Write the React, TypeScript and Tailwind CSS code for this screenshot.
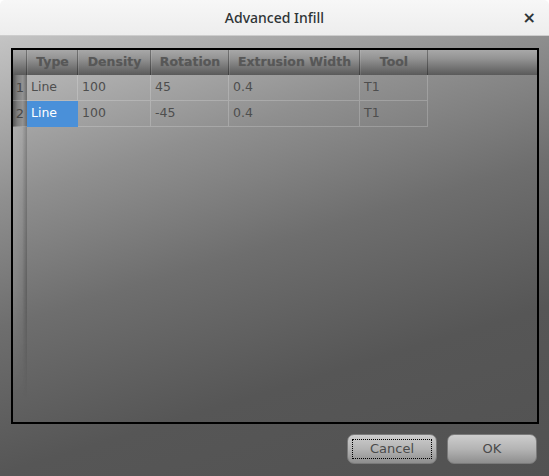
import React from 'react';

// Column widths taken from the infill table
const columns = [
  { key: 'type', label: 'Type', width: 'w-[51px]' },
  { key: 'density', label: 'Density', width: 'w-[73px]' },
  { key: 'rotation', label: 'Rotation', width: 'w-[78px]' },
  { key: 'width', label: 'Extrusion Width', width: 'w-[131px]' },
  { key: 'tool', label: 'Tool', width: 'w-[68px]' },
];

const rows = [
  { type: 'Line', density: '100', rotation: '45', width: '0.4', tool: 'T1' },
  { type: 'Line', density: '100', rotation: '-45', width: '0.4', tool: 'T1' },
];

const headerBg =
  'bg-[linear-gradient(to_bottom,#a8a8a8_0%,#939393_35%,#747474_70%,#5a5a5a_100%)]';

function HeaderCell({ label, width }: { label: string; width: string }) {
  return (
    <div
      className={`${width} h-full flex items-center justify-center ${headerBg} border-l border-white/10 border-r border-r-black/30 text-[12.5px] font-bold text-[#575757] [text-shadow:0_0_1px_rgba(0,0,0,0.15)]`}
    >
      {label}
    </div>
  );
}

function RowHeader({ n }: { n: number }) {
  return (
    <div className="w-[14px] h-full flex items-center justify-center bg-[linear-gradient(to_right,#565656_0%,#7c7c7c_30%,#939393_70%,#6c6c6c_100%)] border-b border-white/20 text-[13px] text-[#474747]">
      {n}
    </div>
  );
}

function Table() {
  return (
    <div className="flex-1 flex flex-col min-h-0">
      {/* header */}
      <div className="h-[25px] flex shrink-0">
        <div className={`w-[14px] h-full ${headerBg} border-r border-black/30`} />
        {columns.map((c) => (
          <HeaderCell key={c.key} label={c.label} width={c.width} />
        ))}
        <div className={`flex-1 h-full ${headerBg}`} />
      </div>

      {rows.map((r, i) => (
        <div key={i} className="h-[26px] flex shrink-0">
          <RowHeader n={i + 1} />
          {columns.map((c, j) => {
            const selected = i === 1 && j === 0;
            return (
              <div
                key={c.key}
                className={`${c.width} h-full flex items-center pl-[4px] text-[12.5px] border-r border-b ${
                  selected
                    ? 'bg-[#4a90d9] text-white border-[#4a90d9]'
                    : 'text-[#4e4e4e] border-white/20'
                }`}
              >
                {r[c.key as keyof typeof r]}
              </div>
            );
          })}
        </div>
      ))}

      {/* empty area with the row header strip fading out */}
      <div className="flex-1 flex">
        <div className="w-[14px] h-full bg-[linear-gradient(to_right,rgba(255,255,255,0.1)_0%,rgba(255,255,255,0.04)_65%,rgba(0,0,0,0.2)_100%)] [mask-image:linear-gradient(to_bottom,black_0%,black_55%,transparent_92%)]" />
      </div>
    </div>
  );
}

function Button({ label, focused }: { label: string; focused?: boolean }) {
  return (
    <button className="w-[90px] h-[30px] rounded-[7px] border border-[#7a7a7a] bg-[linear-gradient(to_bottom,#cdcdcd_0%,#b4b4b4_50%,#8e8e8e_100%)] p-[4px] text-[13px] text-[#4a4a4a]">
      <span
        className={`w-full h-full flex items-center justify-center ${
          focused ? 'border border-dotted border-black' : ''
        }`}
      >
        {label}
      </span>
    </button>
  );
}

export default function App() {
  return (
    <div className="w-[549px] h-[476px] flex flex-col overflow-hidden font-['DejaVu_Sans',sans-serif]">
      {/* title bar */}
      <div className="h-[36px] shrink-0 grid grid-cols-[1fr_auto_1fr] items-center bg-[linear-gradient(to_bottom,#f7f7f7,#ededed)] border-b border-[#cdcdcd] rounded-t-[5px]">
        <div />
        <div className="font-['Noto_Sans',sans-serif] font-medium text-[14px] text-[#2e3436]">
          Advanced Infill
        </div>
        <div className="justify-self-end pr-[13px] text-[16px] font-bold text-[#2e3436] leading-none">
          ×
        </div>
      </div>

      {/* body */}
      <div className="flex-1 flex flex-col bg-[linear-gradient(163deg,#c4c4c4_0%,#8f8f8f_27%,#6e6e6e_48%,#565656_72%,#525252_100%)]">
        <div className="mt-[12px] ml-[11px] mr-[10px] h-[376px] border-2 border-black flex flex-col">
          <Table />
        </div>
        <div className="mt-[10px] flex justify-end gap-[10px] pr-[12px]">
          <Button label="Cancel" focused />
          <Button label="OK" />
        </div>
      </div>
    </div>
  );
}
